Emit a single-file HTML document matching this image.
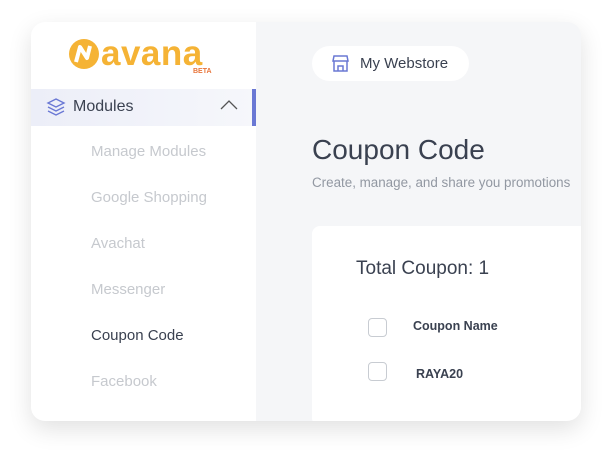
<!DOCTYPE html>
<html><head><style>
body{margin:0;width:610px;height:460px;background:#fff;font-family:"Liberation Sans",sans-serif;position:relative;overflow:hidden}
.card{position:absolute;left:31px;top:22px;width:550px;height:399px;border-radius:14px;overflow:hidden;background:#f5f6f8;box-shadow:0 8px 24px rgba(0,0,0,0.12)}
.side{position:absolute;left:0;top:0;width:225px;height:399px;background:#fff}
.item{position:absolute;left:60px;font-size:15px;color:#c6c9ce}
.mod{position:absolute;left:0;top:67px;width:225px;height:37px;background:linear-gradient(90deg,#eceef8,#f6f7fb)}
.bar{position:absolute;right:0;top:0;width:4px;height:37px;background:#6a78d4}
.pill{position:absolute;left:281px;top:24px;width:157px;height:35px;border-radius:18px;background:#fff}
.wc{position:absolute;left:281px;top:204px;width:300px;height:200px;background:#fff;border-radius:8px}
.cb{position:absolute;width:17px;height:17px;border:1.3px solid #c8ccd2;border-radius:4px;background:#fff}
</style></head><body>
<div class="card">
 <div class="side">
  <svg style="position:absolute;left:37px;top:16px" width="32" height="32" viewBox="0 0 32 32"><circle cx="16" cy="16" r="15" fill="#f5b335"/><path d="M8 24 L12 9 L19 20 L22 8" stroke="#fff" stroke-width="4" fill="none" stroke-linejoin="round"/></svg>
  <div style="position:absolute;left:70px;top:12px;font-size:35px;color:#f5b335;font-weight:bold;letter-spacing:0.5px">avana</div>
  <div style="position:absolute;left:162px;top:46px;font-size:7px;color:#e8753a;font-weight:bold">BETA</div>
  <div class="mod"><div class="bar"></div>
   <svg style="position:absolute;left:15px;top:8px" width="20" height="20" viewBox="0 0 20 20" fill="none" stroke="#6a78d4" stroke-width="1.4"><path d="M10 2 L18 6 L10 10 L2 6Z"/><path d="M2 10 L10 14 L18 10"/><path d="M2 14 L10 18 L18 14"/></svg>
   <div style="position:absolute;left:42px;top:9px;font-size:16px;color:#3a4150">Modules</div>
   <svg style="position:absolute;left:189px;top:11px" width="18" height="10" viewBox="0 0 18 10"><path d="M1 9 L9 1 L17 9" stroke="#555" stroke-width="1.3" fill="none"/></svg>
  </div>
  <div class="item" style="top:121px">Manage Modules</div>
  <div class="item" style="top:167px">Google Shopping</div>
  <div class="item" style="top:213px">Avachat</div>
  <div class="item" style="top:259px">Messenger</div>
  <div class="item" style="top:305px;color:#3a4150">Coupon Code</div>
  <div class="item" style="top:351px">Facebook</div>
 </div>
 <div class="pill">
  <svg style="position:absolute;left:19px;top:8px" width="19" height="19" viewBox="0 0 19 19" fill="none" stroke="#6a78d4" stroke-width="1.5"><path d="M3 2h13l1 5H2z"/><path d="M3 7v10h13V7"/><path d="M7 17v-5h5v5"/></svg>
  <div style="position:absolute;left:48px;top:9px;font-size:15px;color:#3a4150">My Webstore</div>
 </div>
 <div style="position:absolute;left:281px;top:112px;font-size:28px;color:#3a4150">Coupon Code</div>
 <div style="position:absolute;left:281px;top:153px;font-size:13.4px;color:#9298a2;white-space:nowrap">Create, manage, and share you promotions</div>
 <div class="wc">
  <div style="position:absolute;left:44px;top:32px;font-size:19px;color:#3a4150">Total Coupon: 1</div>
  <div class="cb" style="left:56px;top:92px"></div>
  <div style="position:absolute;left:101px;top:93px;font-size:12.5px;font-weight:bold;color:#3a4150">Coupon Name</div>
  <div class="cb" style="left:56px;top:136px"></div>
  <div style="position:absolute;left:104px;top:141px;font-size:12.5px;font-weight:bold;color:#3a4150">RAYA20</div>
 </div>
</div>
</body></html>
